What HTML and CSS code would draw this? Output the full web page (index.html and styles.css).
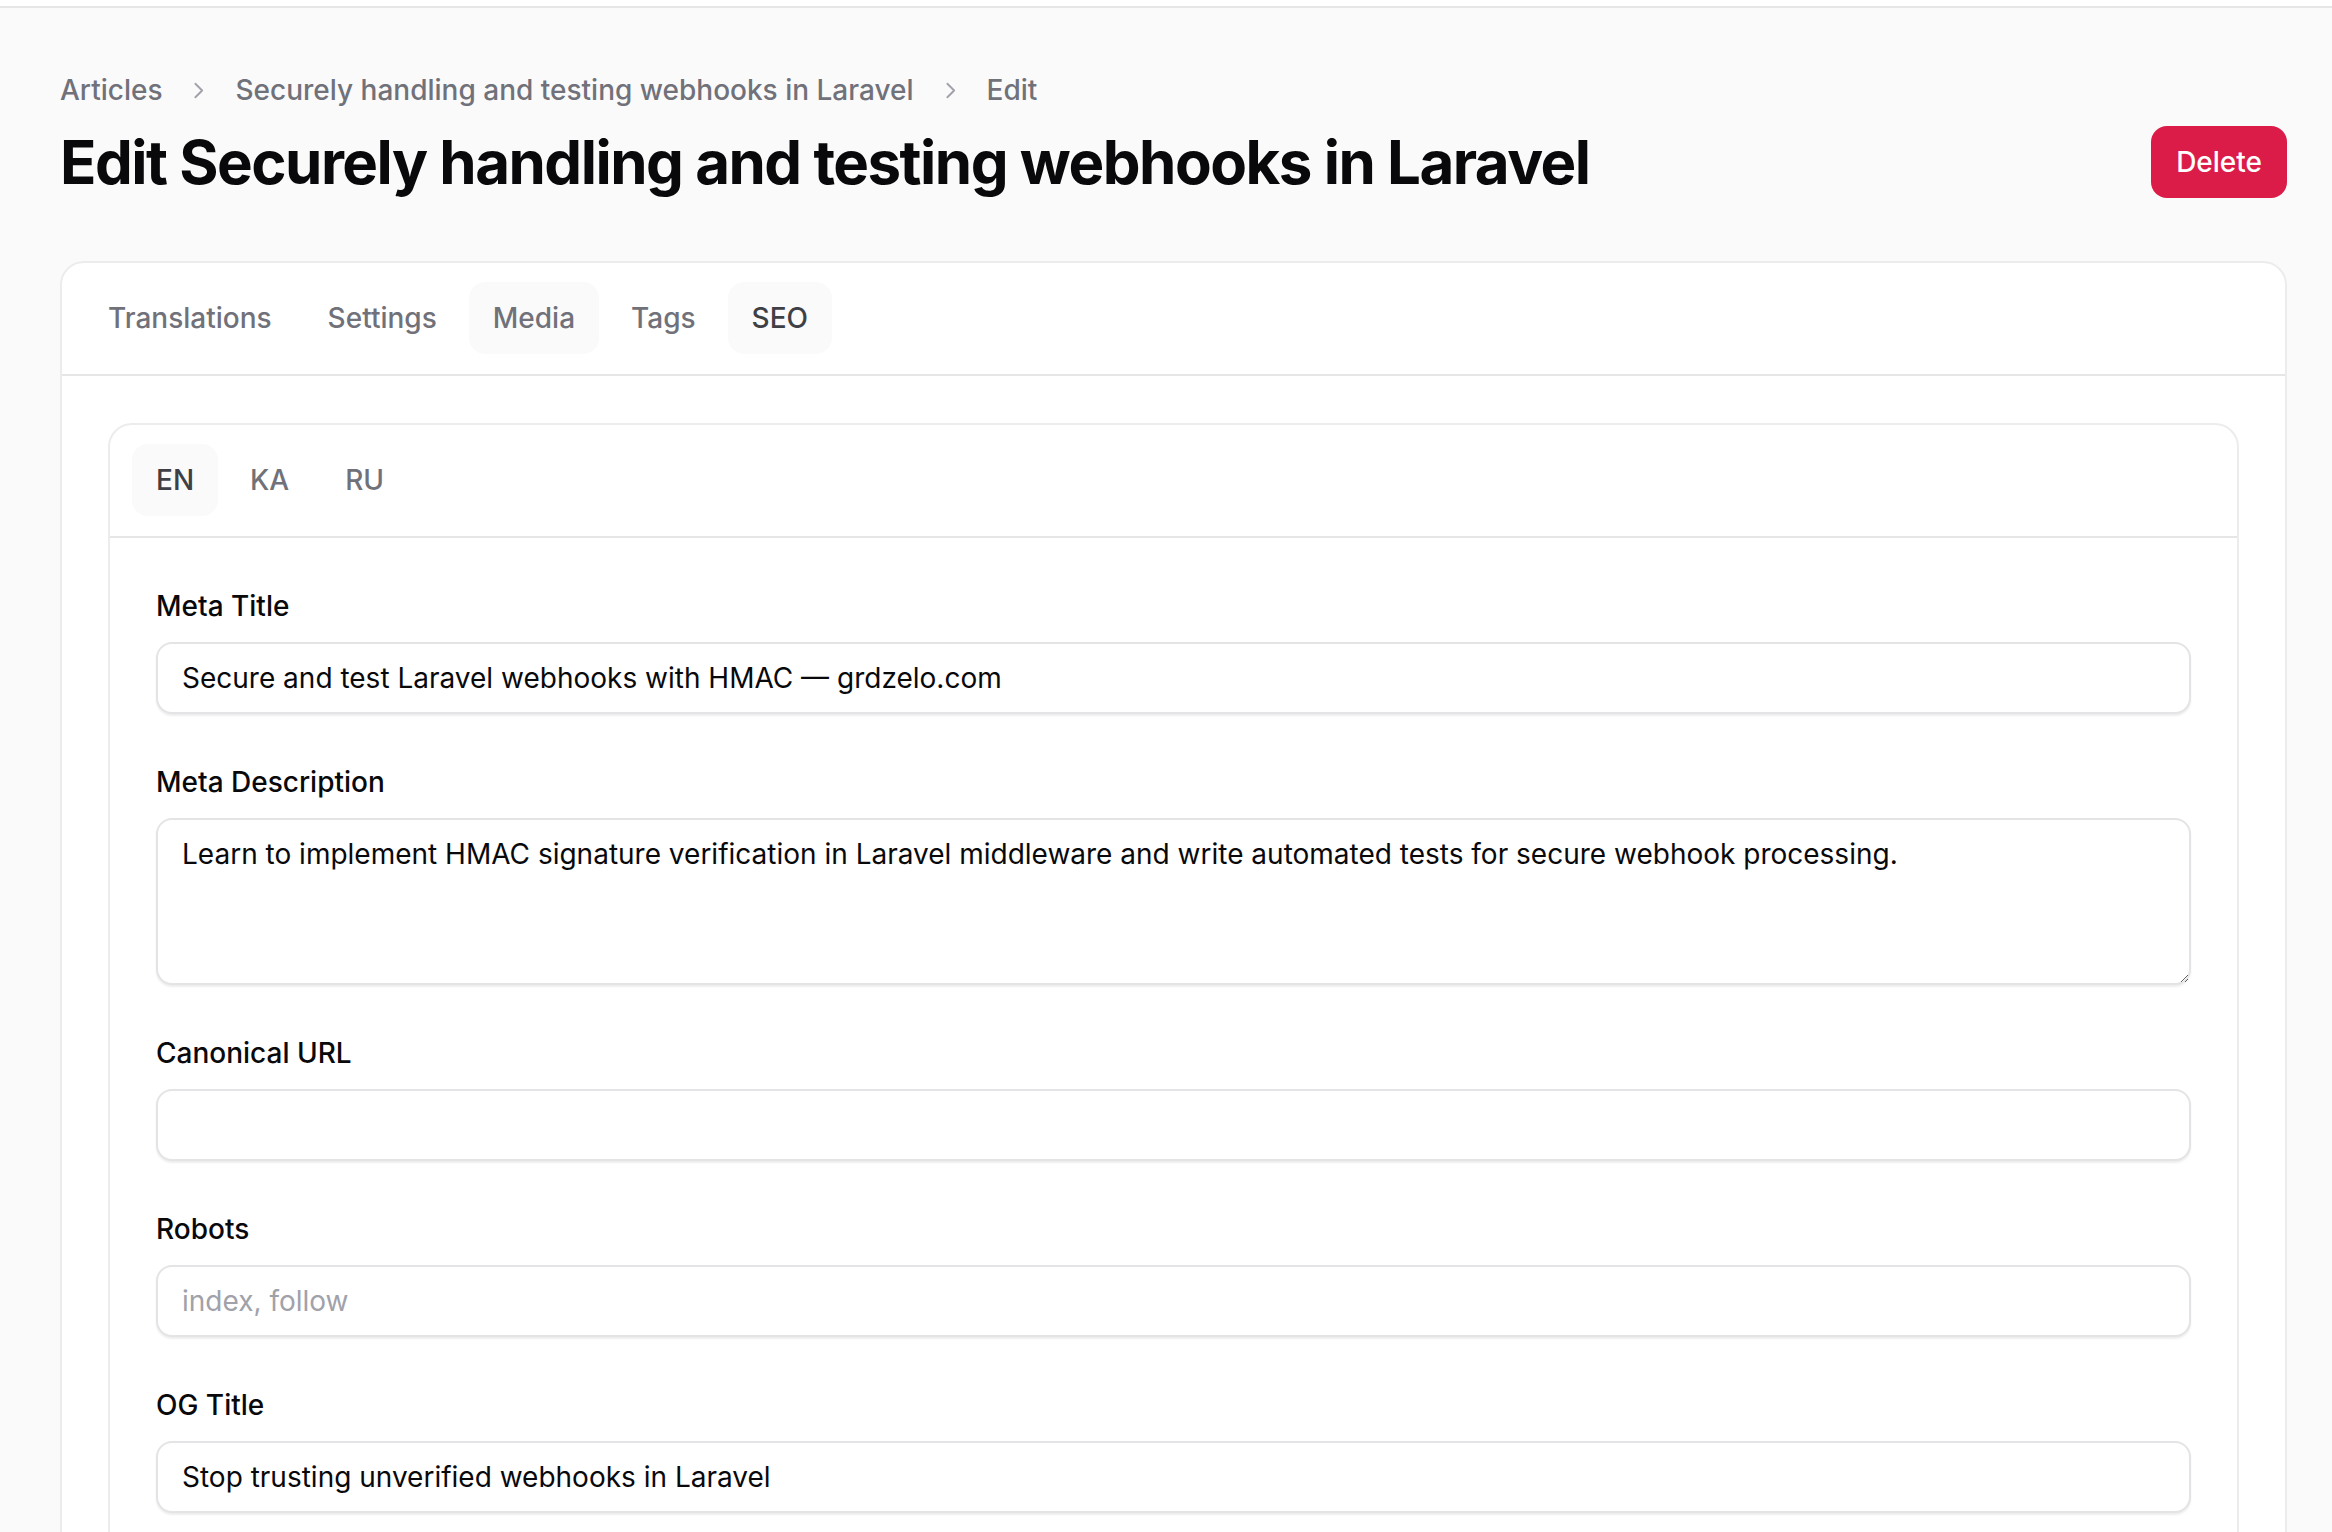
FILE: index.html
```html
<!DOCTYPE html>
<html lang="en">
<head>
<meta charset="utf-8">
<title>Edit Securely handling and testing webhooks in Laravel</title>
<link rel="stylesheet" href="styles.css">
</head>
<body>
<div class="topbar"></div>
<main class="page">
  <nav class="breadcrumb">
    <span class="crumb">Articles</span>
    <svg class="chev" viewBox="0 0 24 24" width="25" height="25"><path d="M9 5.5l6.5 6.5L9 18.5" fill="none" stroke="currentColor" stroke-width="1.8" stroke-linecap="round" stroke-linejoin="round"/></svg>
    <span class="crumb">Securely handling and testing webhooks in Laravel</span>
    <svg class="chev" viewBox="0 0 24 24" width="25" height="25"><path d="M9 5.5l6.5 6.5L9 18.5" fill="none" stroke="currentColor" stroke-width="1.8" stroke-linecap="round" stroke-linejoin="round"/></svg>
    <span class="crumb">Edit</span>
  </nav>
  <div class="title-row">
    <h1 class="title">Edit Securely handling and testing webhooks in Laravel</h1>
    <button class="btn-delete" type="button">Delete</button>
  </div>

  <section class="card">
    <div class="tabs">
      <span class="tab">Translations</span>
      <span class="tab">Settings</span>
      <span class="tab tab-hover">Media</span>
      <span class="tab">Tags</span>
      <span class="tab tab-active">SEO</span>
    </div>
    <div class="card-body">
      <section class="inner-card">
        <div class="tabs lang-tabs">
          <span class="tab tab-active">EN</span>
          <span class="tab">KA</span>
          <span class="tab">RU</span>
        </div>
        <div class="fields">
          <div class="field">
            <label class="label">Meta Title</label>
            <input class="input" type="text" value="Secure and test Laravel webhooks with HMAC — grdzelo.com">
          </div>
          <div class="field">
            <label class="label">Meta Description</label>
            <textarea class="input textarea">Learn to implement HMAC signature verification in Laravel middleware and write automated tests for secure webhook processing.</textarea>
          </div>
          <div class="field">
            <label class="label">Canonical URL</label>
            <input class="input" type="text" value="">
          </div>
          <div class="field">
            <label class="label">Robots</label>
            <input class="input" type="text" placeholder="index, follow">
          </div>
          <div class="field">
            <label class="label">OG Title</label>
            <input class="input" type="text" value="Stop trusting unverified webhooks in Laravel">
          </div>
        </div>
      </section>
    </div>
  </section>
</main>
</body>
</html>
```
FILE: styles.css
```css
* { box-sizing: border-box; }
html, body { margin: 0; padding: 0; }
body {
  background: #fafafa;
  font-family: Inter, "Noto Sans", "Liberation Sans", sans-serif;
  color: #09090b;
  height: 1532px;
  overflow: hidden;
}
.topbar {
  height: 8px;
  background: #ffffff;
  border-bottom: 2px solid #e6e6e6;
}
.page {
  margin-left: 60px;
  width: 2227px;
  padding-top: 62px;
}
.breadcrumb {
  display: flex;
  align-items: center;
  gap: 24px;
  height: 40px;
  font-size: 28px;
  line-height: 40px;
  font-weight: 500;
  color: #71717a;
}
.chev { color: #a1a1aa; flex: none; }
.title-row {
  display: flex;
  align-items: center;
  justify-content: space-between;
  margin-top: 16px;
  height: 72px;
}
.title {
  margin: 0;
  font-size: 60px;
  line-height: 72px;
  font-weight: 700;
  letter-spacing: -1.5px;
  color: #09090b;
}
.btn-delete {
  height: 72px;
  padding: 0 25px;
  border: none;
  border-radius: 16px;
  background: #dc1c48;
  color: #ffffff;
  font-family: inherit;
  font-size: 28px;
  font-weight: 500;
}
.card {
  margin-top: 63px;
  background: #ffffff;
  border: 2px solid #ececec;
  border-radius: 24px;
  height: 1400px;
}
.tabs {
  display: flex;
  gap: 8px;
  padding: 19px 22px 20px;
  border-bottom: 2px solid #e6e6e6;
}
.tab {
  height: 72px;
  display: flex;
  align-items: center;
  padding: 0 24px;
  border-radius: 16px;
  font-size: 28px;
  font-weight: 500;
  color: #71717a;
}
.tab-hover { background: #fafafa; }
.tab-active { background: #fafafa; color: #3f3f46; }
.card-body {
  padding: 47px 46px 0;
}
.inner-card {
  border: 2px solid #ececec;
  border-radius: 24px;
  background: #ffffff;
  height: 1300px;
}
.lang-tabs {
  padding: 19px 22px 20px;
}
.fields {
  padding: 48px 46px 0;
  display: flex;
  flex-direction: column;
  gap: 48px;
}
.field {
  display: flex;
  flex-direction: column;
  gap: 16px;
}
.label {
  font-size: 28px;
  line-height: 40px;
  font-weight: 500;
  color: #09090b;
}
.input {
  display: block;
  width: 100%;
  height: 72px;
  padding: 14px 24px;
  border: 2px solid #e4e4e7;
  border-radius: 16px;
  background: #ffffff;
  box-shadow: 0 2px 2px rgba(0, 0, 0, 0.07);
  font-family: inherit;
  font-size: 28px;
  line-height: 40px;
  color: #09090b;
  outline: none;
}
.input::placeholder { color: #a1a1aa; }
.textarea {
  height: 167px;
  resize: vertical;
}
```
